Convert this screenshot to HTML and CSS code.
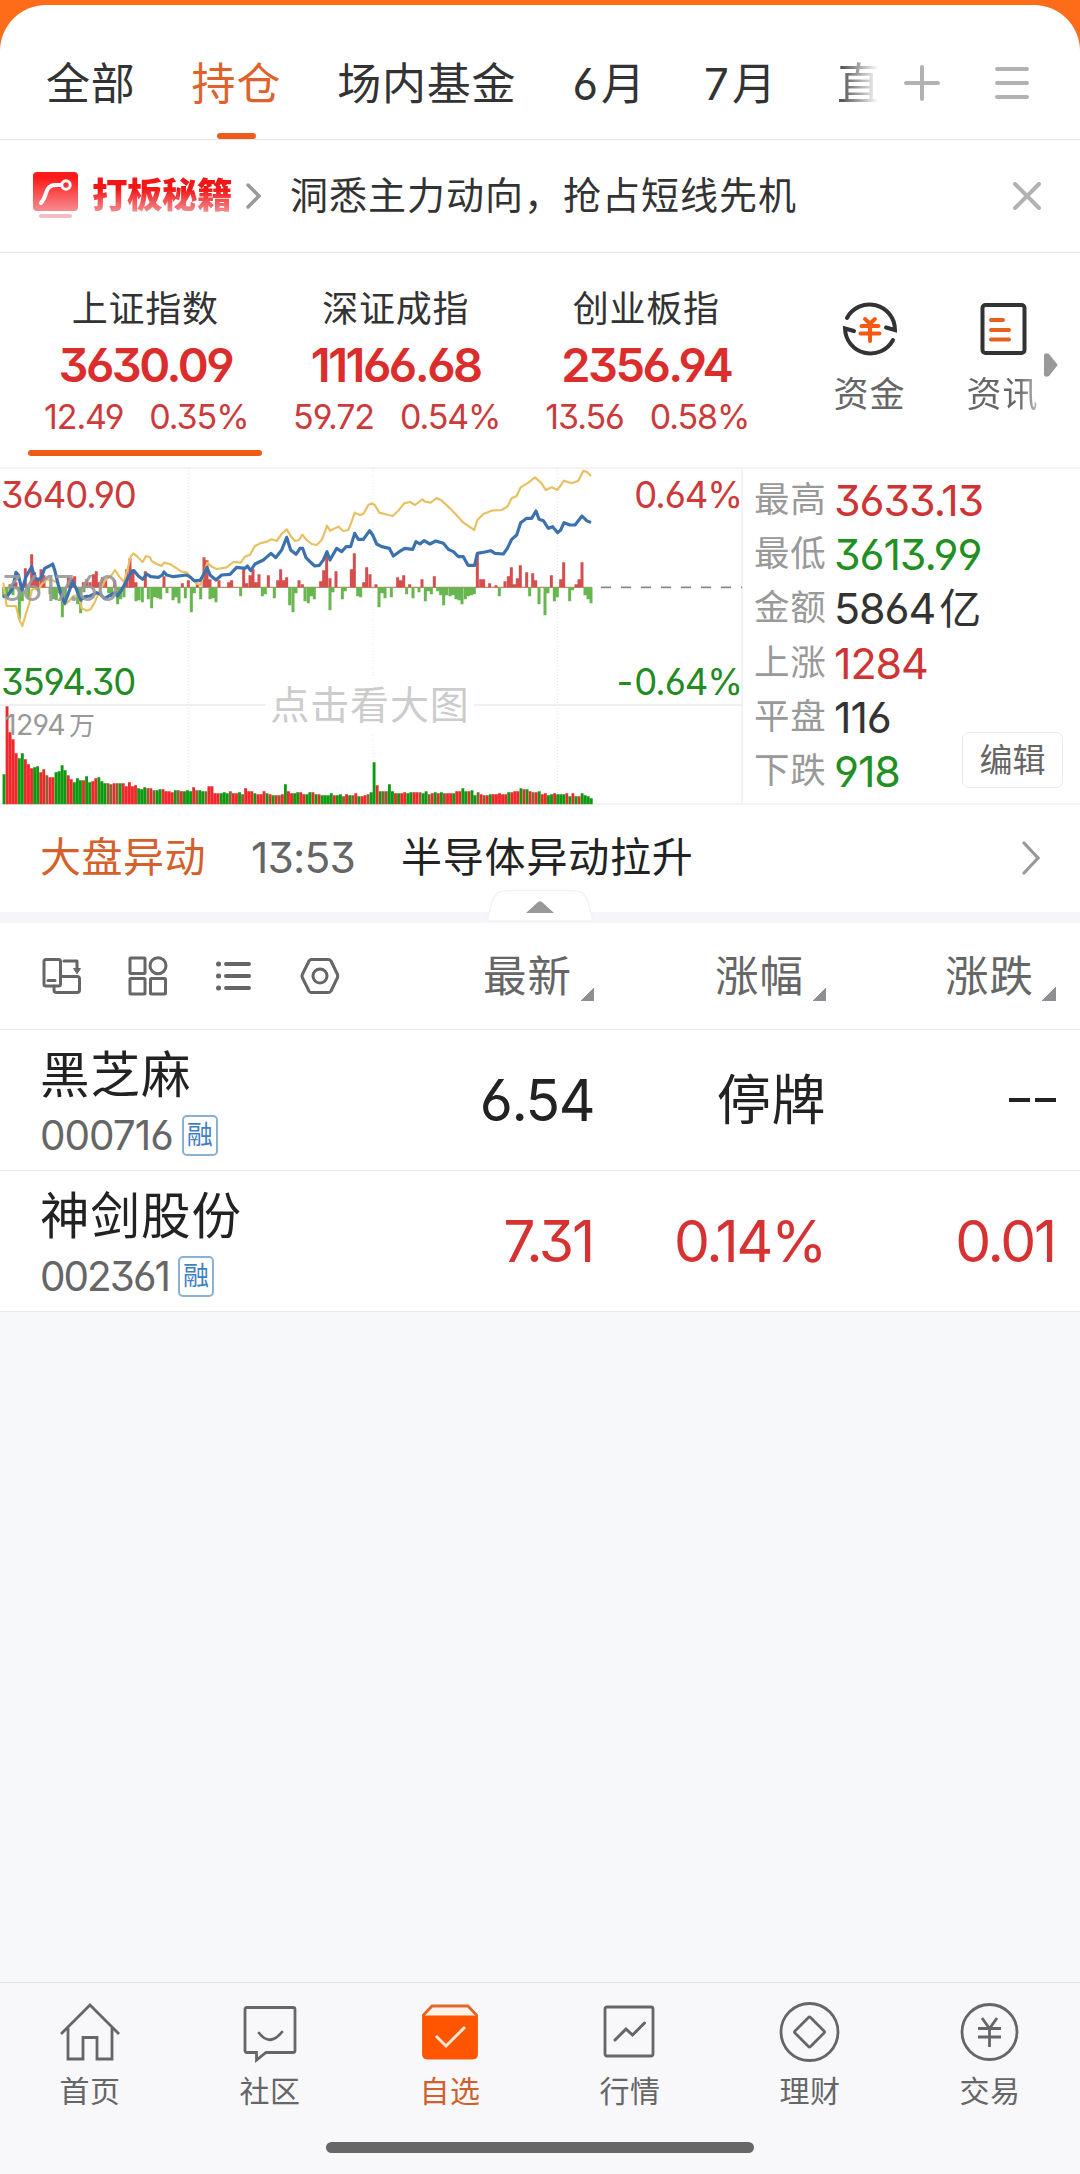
FILE: index.html
```html
<!DOCTYPE html>
<html lang="zh-CN">
<head>
<meta charset="utf-8">
<title>自选</title>
<link rel="stylesheet" href="styles.css">
</head>
<body>
<div class="app">
  <div class="sheet">
    <header class="tabs">
      <nav class="tab-list">
        <span class="tab">全部</span>
        <span class="tab active">持仓</span>
        <span class="tab">场内基金</span>
        <span class="tab month">6月</span>
        <span class="tab month">7月</span>
        <span class="tab fade">直</span>
      </nav>
      <svg class="ic-plus" width="36" height="36" viewBox="0 0 36 36"><path d="M2 18H34M18 2V34"/></svg>
      <svg class="ic-menu" width="34" height="34" viewBox="0 0 34 34"><path d="M2 3H32M2 17H32M2 31H32"/></svg>
    </header>

    <section class="promo">
      <svg width="46" height="48" viewBox="0 0 46 48">
        <defs><linearGradient id="pg" x1="0" y1="0" x2="0" y2="1"><stop offset=".15" stop-color="#ff1a1a"/><stop offset="1" stop-color="#f58c90"/></linearGradient></defs>
        <rect width="45" height="39" rx="4" fill="url(#pg)"/>
        <path d="M8 31C15 24 11 13 23 13H28" fill="none" stroke="#fff" stroke-width="4" stroke-linecap="round"/>
        <circle cx="33" cy="13" r="4.2" fill="#f43535" stroke="#fff" stroke-width="3"/>
        <rect x="6" y="42" width="33" height="4" rx="2" fill="#f3bcc0"/>
      </svg>
      <b class="promo-name">打板秘籍</b>
      <svg class="promo-go" width="15" height="26" viewBox="0 0 15 26"><path d="M2 2L13 13L2 24"/></svg>
      <span class="promo-text">洞悉主力动向，抢占短线先机</span>
      <svg class="promo-x" width="28" height="28" viewBox="0 0 28 28"><path d="M2 2L26 26M26 2L2 26"/></svg>
    </section>

    <section class="indices">
      <div class="index on"><span class="iname">上证指数</span><b>3630.09</b><span class="chg"><i>12.49</i><i>0.35%</i></span></div>
      <div class="index"><span class="iname">深证成指</span><b>11166.68</b><span class="chg"><i>59.72</i><i>0.54%</i></span></div>
      <div class="index"><span class="iname">创业板指</span><b>2356.94</b><span class="chg"><i>13.56</i><i>0.58%</i></span></div>
      <div class="shortcuts">
        <div class="short">
          <svg width="56" height="58" viewBox="0 0 56 58" fill="none" stroke="#333" stroke-width="4" stroke-linecap="round">
            <path d="M5 18A25.500 25.500 0 0 1 53 30L44 27.500"/><path d="M51 40A25.500 25.500 0 0 1 3 28.500L12 31"/>
            <path d="M23 19L28 23.500L33 19M19.500 26H36.500M18.500 33.500H37.500M28 25V41" stroke="#f65a10"/>
          </svg>
          <span>资金</span>
        </div>
        <div class="short">
          <svg width="56" height="58" viewBox="0 0 56 58" fill="none" stroke="#333" stroke-width="4" stroke-linecap="round">
            <rect x="7.500" y="5" width="42" height="48" rx="3"/>
            <path d="M16 20H28M16 30H34M16 39.500H34" stroke="#e8601e"/>
          </svg>
          <span class="dim">资讯</span>
        </div>
      </div>
      <svg class="more" width="14" height="26" viewBox="0 0 14 26"><path d="M0 3Q1 0 5 2L13 12Q14 13 13 14L5 24Q1 26 0 23Z" fill="#999"/></svg>
    </section>

    <section class="market">
      <div class="chart">
        <svg id="plot" width="742" height="338" viewBox="0 21 2226 1014"></svg>
        <span class="lab hi">3640.90</span>
        <span class="lab hi right">0.64%</span>
        <span class="lab mid">3617.60</span>
        <span class="lab lo">3594.30</span>
        <span class="lab lo right"><em>-</em>0.64%</span>
        <span class="lab vol">1294<em>万</em></span>
        <span class="hint">点击看大图</span>
      </div>
      <dl class="stats">
        <div><dt>最高</dt><dd class="up">3633.13</dd></div>
        <div><dt>最低</dt><dd class="down">3613.99</dd></div>
        <div><dt>金额</dt><dd>5864<em>亿</em></dd></div>
        <div><dt>上涨</dt><dd class="up">1284</dd></div>
        <div><dt>平盘</dt><dd>116</dd></div>
        <div><dt>下跌</dt><dd class="down">918</dd></div>
        <button class="edit">编辑</button>
      </dl>
    </section>

    <section class="alert">
      <span class="alert-tag">大盘异动</span>
      <span class="alert-time">13:53</span>
      <span class="alert-text">半导体异动拉升</span>
      <svg width="18" height="34" viewBox="0 0 18 34"><path d="M2 2L16 17L2 32"/></svg>
    </section>
    <div class="band">
      <svg class="handle" width="110" height="34" viewBox="0 0 110 34">
        <path d="M2 32L7 13Q10 1.500 22 1.500H88Q100 1.500 103 13L108 32Z" fill="#fff" stroke="#f3f3f5" stroke-width="1.500"/>
        <path d="M41 24L53 13Q55 11.500 57 13L69 24Z" fill="#999"/>
      </svg>
    </div>

    <div class="head grid">
      <div class="tools">
        <svg width="40" height="40" viewBox="0 0 40 40"><rect x="2" y="3.500" width="16.500" height="26.500" rx="2"/><path d="M6 24.500H13M12 30V34Q12 36.500 14.500 36.500H35Q37.500 36.500 37.500 34V23Q37.500 20.500 35 20.500H19M22 5H35V14"/><path d="M32 12.500H38.500L35.200 17.500Z" fill="#666" stroke-width="1"/></svg>
        <svg width="40" height="40" viewBox="0 0 40 40"><rect x="2" y="2" width="15" height="15.500" rx="1"/><circle cx="30" cy="9.700" r="8"/><rect x="2" y="22.500" width="15" height="15.500" rx="1"/><rect x="22.500" y="22.500" width="15" height="15.500" rx="1"/></svg>
        <svg width="40" height="40" viewBox="0 0 40 40"><path d="M12 8H35M12 20H35M12 32H35" stroke-width="4"/><path d="M4.500 8h.1M4.500 20h.1M4.500 32h.1" stroke-width="5"/></svg>
        <svg width="40" height="40" viewBox="0 0 40 40"><path d="M11.500 3.500H28Q30 3.500 31 5L37.500 18.500Q38 20 37.500 21.500L31 35Q30 36.500 28 36.500H11.500Q10 36.500 9 35L2.300 21.500Q1.700 20 2.300 18.500L9 5Q10 3.500 11.500 3.500Z"/><circle cx="20" cy="20" r="7"/></svg>
      </div>
      <span class="sort">最新</span><span class="sort">涨幅</span><span class="sort">涨跌</span>
    </div>
    <div class="row grid">
      <div class="stock"><span class="sname">黑芝麻</span><span class="code">000716<i>融</i></span></div>
      <span class="val">6.54</span><span class="val cjk">停牌</span><span class="val dash"><i></i><i></i></span>
    </div>
    <div class="row grid red">
      <div class="stock"><span class="sname">神剑股份</span><span class="code tight">002361<i>融</i></span></div>
      <span class="val">7.31</span><span class="val">0.14%</span><span class="val">0.01</span>
    </div>
  </div>

  <footer class="nav">
    <div class="item"><svg viewBox="0 0 64 64"><path d="M3 34L32 5L61 34M10 28V59H25V37.500H39V59H54V28"/></svg>首页</div>
    <div class="item"><svg viewBox="0 0 64 64"><path d="M9 7.500H55Q57 7.500 57 9.500V50.500Q57 52.500 55 52.500H28L18.500 60V52.500H9Q7 52.500 7 50.500V9.500Q7 7.500 9 7.500Z"/><path d="M21 33Q32 47 44 32" stroke-linecap="round"/></svg>社区</div>
    <div class="item cur"><svg viewBox="0 0 64 64"><path d="M5.500 15L14 6H50L58.500 15V54Q58.500 58 54.500 58H9.500Q5.500 58 5.500 54Z" fill="#fff3e9" stroke="#e5662c"/><path d="M4.500 15.500H59.500V54.500Q59.500 59 55 59H9Q4.500 59 4.500 54.500Z" fill="#ff5500" stroke="none"/><path d="M18 36L28 46L47 27" stroke="#ffe8d2" stroke-width="3"/></svg>自选</div>
    <div class="item"><svg viewBox="0 0 64 64"><rect x="7" y="7" width="48" height="49" rx="2"/><path d="M17 40L28 29L34.500 35L46.500 23" stroke-width="3" stroke-linecap="round"/></svg>行情</div>
    <div class="item"><svg viewBox="0 0 64 64"><circle cx="31.500" cy="32" r="28.500"/><path d="M30.500 17.500Q31.500 16.500 32.500 17.500L46 31Q47 32 46 33L32.500 46.500Q31.500 47.500 30.500 46.500L17 33Q16 32 17 31Z"/></svg>理财</div>
    <div class="item"><svg viewBox="0 0 64 64"><circle cx="31.500" cy="32" r="27.500"/><path d="M24 18L31.500 28.500L39 18M20 28.500H43M20 37H43M31.500 28.500V47"/></svg>交易</div>
    <div class="homebar"></div>
  </footer>
</div>
<script src="chart.js"></script>
</body>
</html>
```
FILE: styles.css
```css
* { box-sizing: border-box; }
body { margin: 0; background: #f7f8fa; font-family: Inter, "Noto Sans CJK SC", sans-serif; color: #333; font-feature-settings: "cv03", "cv04", "cv09"; }
i, em { font-style: normal; }
svg { display: block; flex: none; }
.app { width: 1080px; height: 2174px; display: flex; flex-direction: column; background: linear-gradient(#ff6c19 60px, #f7f8fa 60px); padding-top: 5px; overflow: hidden; }
.sheet { background: #fff; border-radius: 46px 46px 0 0; }

.tabs { height: 135px; border-bottom: 1px solid #e4e4e4; display: flex; align-items: center; }
.tab-list { display: flex; gap: 56px; padding-left: 46px; width: 904px; height: 134px; flex: none; }
.tab { position: relative; font-size: 44px; letter-spacing: .8px; line-height: 158px; white-space: nowrap; }
.tab.month { letter-spacing: 3px; }
.tab.active { color: #e0622b; }
.tab.active::after { content: ""; position: absolute; left: 25px; bottom: 0; width: 39px; height: 6px; border-radius: 3px; background: #ee5c1c; }
.tab.fade { margin-left: 2px; background: linear-gradient(90deg, #555 10%, #fff 92%); background-clip: text; -webkit-background-clip: text; color: transparent; }
.ic-plus, .ic-menu { fill: none; stroke: #b2b2b2; stroke-width: 4; stroke-linecap: round; position: relative; top: 11px; }
.ic-menu { margin-left: 55px; }

.promo { height: 113px; border-bottom: 1px solid #e4e4e4; display: flex; align-items: center; padding: 0 39px 0 33px; }
.promo-name { margin-left: 13px; width: 142px; font-size: 35.500px; font-weight: 900; letter-spacing: -.5px; line-height: 46px; background: linear-gradient(#f31616 35%, #f39a9c 90%); background-clip: text; -webkit-background-clip: text; color: transparent; }
.promo-go { margin-left: 12px; fill: none; stroke: #999; stroke-width: 3.500; stroke-linecap: round; }
.promo-text { margin-left: 29px; font-size: 38px; letter-spacing: 1px; flex: 1; line-height: 50px; padding-bottom: 2px; }
.promo-x { fill: none; stroke: #b2b2b2; stroke-width: 4; stroke-linecap: round; }

.indices { height: 214px; display: flex; position: relative; padding-left: 20px; }
.index { width: 250.500px; padding-top: 33px; display: flex; flex-direction: column; align-items: center; position: relative; }
.iname { font-size: 36px; letter-spacing: .8px; line-height: 46px; }
.index b { font-size: 47px; line-height: 66px; font-weight: 600; color: #dc2d2d; letter-spacing: -2.500px; }
.chg { display: flex; gap: 26px; font-size: 34px; line-height: 38px; letter-spacing: -1.100px; color: #cc3b3b; padding-left: 2px; }
.index.on::after { content: ""; position: absolute; left: 8px; top: 197px; width: 234px; height: 6px; border-radius: 3px; background: #f25a14; }
.shortcuts { display: flex; margin-left: 62px; gap: 61px; padding-top: 47px; }
.short { display: flex; flex-direction: column; align-items: center; width: 72px; font-size: 35px; letter-spacing: 1px; color: #666; line-height: 50px; }
.short span { margin-top: 11px; white-space: nowrap; }
.dim { background: linear-gradient(90deg, #666 70%, #bbb); background-clip: text; -webkit-background-clip: text; color: transparent; }
.more { position: absolute; left: 1044px; top: 99px; }

.market { display: flex; height: 338px; border-top: 2px solid #f3f3f3; border-bottom: 2px solid #f3f3f3; }
.chart { width: 743px; height: 338px; border-right: 2px solid #f3f3f3; position: relative; margin-top: -2px; flex: none; }
.lab { position: absolute; left: 1px; font-size: 36.500px; letter-spacing: -1.100px; line-height: 40px; }
.lab.right { left: auto; right: -1px; }
.hi { top: 8px; color: #cc3a3a; }
.lo { top: 195px; color: #228b22; }
.lab.lo em { margin-right: 2px; }
.mid { top: 101px; font-size: 35px; letter-spacing: -2px; color: #999; opacity: .9; }
.lab.mid { left: 1px; font-size: 36px; letter-spacing: -1.600px; }
.lab.vol { top: 238px; left: 5px; font-size: 28.500px; letter-spacing: -.7px; color: #999; }
.vol em { font-size: 26px; margin-left: 4px; }
.hint { position: absolute; left: 266px; top: 209px; width: 208px; text-align: center; background: #fff; color: #ccc; font-size: 39px; letter-spacing: .9px; line-height: 58px; }

.stats { margin: 0; padding: 4px 0 0 11px; flex: 1; position: relative; }
.stats div { display: flex; align-items: center; height: 54.200px; gap: 7px; }
dt { flex: none; font-size: 35.500px; letter-spacing: .8px; color: #999; line-height: 50px; width: 73px; white-space: nowrap; }
dd { margin: 0; font-size: 43px; letter-spacing: -1.100px; line-height: 50px; white-space: nowrap; }
dd em { font-size: 42px; margin-left: 4px; }
.up { color: #cf3434; }
.down { color: #228f22; }
.edit { position: absolute; left: 219px; top: 263px; width: 101px; height: 56px; padding: 0; border: 1.500px solid #e8e8e8; border-radius: 7px; background: #fff; font: 33px/50px Inter, "Noto Sans CJK SC", sans-serif; color: #666; }

.alert { height: 107px; display: flex; align-items: center; padding: 0 40px; font-size: 41px; letter-spacing: .8px; line-height: 56px; }
.alert-tag { color: #d4602b; width: 211px; padding-bottom: 4px; letter-spacing: .5px; }
.alert-time { color: #666; font-size: 42.500px; letter-spacing: -.8px; width: 150px; padding-bottom: 1px; }
.alert-text { color: #222; flex: 1; padding-bottom: 4px; }
.alert svg { fill: none; stroke: #999; stroke-width: 3.200; stroke-linecap: round; margin-bottom: 2px; }
.band { height: 11px; background: #f5f6fa; position: relative; }
.handle { position: absolute; left: 485px; top: -23px; }

.grid { display: grid; grid-template-columns: 1fr 232px 232px 230px; align-items: center; padding: 0 24px 0 40px; border-bottom: 1px solid #e8e8e8; }
.head { height: 107px; }
.tools { display: flex; gap: 46px; padding-left: 2px; }
.tools svg { fill: none; stroke: #666; stroke-width: 3; stroke-linecap: round; stroke-linejoin: round; }
.sort { justify-self: end; display: flex; font-size: 43.500px; letter-spacing: 1px; color: #666; line-height: 60px; }
.sort::after { content: ""; width: 14px; height: 14px; margin: 41px 0 0 8px; background: linear-gradient(135deg, transparent 50%, #8e8e93 50%); }
.row { height: 141px; }
.stock { display: flex; flex-direction: column; padding-top: 6px; }
.sname { font-size: 49.500px; letter-spacing: 1px; color: #222; line-height: 66px; height: 64px; }
.code { display: flex; align-items: center; height: 58px; font-size: 40.500px; letter-spacing: -1px; color: #666; }
.code.tight { letter-spacing: -2px; }
.code i { margin-left: 9px; width: 36px; height: 41px; border: 2px solid #8bb0d3; border-radius: 5px; font-size: 26px; line-height: 36px; text-align: center; letter-spacing: 0; color: #3f7fc4; }
.val { justify-self: end; font-size: 57px; letter-spacing: -1.500px; color: #222; line-height: 76px; padding-top: 2px; }
.red .val { color: #d63232; letter-spacing: -2.200px; padding-right: 1px; }
.val.cjk { font-size: 54px; letter-spacing: .6px; }
.dash { display: flex; gap: 5px; padding: 0; }
.dash i { width: 21px; height: 4px; background: #222; }

.nav { margin-top: auto; height: 192px; border-top: 1px solid #e2e2e4; background: #f8f8fa; display: grid; grid-template-columns: repeat(6, 180px); align-content: start; padding-top: 17px; position: relative; flex: none; }
.item { display: flex; flex-direction: column; align-items: center; font-size: 30px; letter-spacing: .6px; line-height: 55px; color: #666; }
.item svg { width: 64px; height: 64px; fill: none; stroke: #666; stroke-width: 2.800; }
.item.cur { color: #d0602c; }
.homebar { position: absolute; left: 326px; top: 159px; width: 428px; height: 11px; border-radius: 6px; background: #676767; }
```
FILE: chart.js
```js
// Plot units are thirds of a pixel; x runs from 0 to 2226.
const svg = document.getElementById('plot');
const NS = 'http://www.w3.org/2000/svg';
function path(d, attrs) {
  const p = document.createElementNS(NS, 'path');
  p.setAttribute('d', d);
  for (const k in attrs) p.setAttribute(k, attrs[k]);
  svg.appendChild(p);
}
const ZERO = 382, BASE = 1033;

// grid
path('M566 24V1030M1119 24V1030M1672 24V1030', { stroke: '#e4e4e4', 'stroke-width': 3, 'stroke-dasharray': '3 6' });
path('M0 735H2226', { stroke: '#f0f0f0', 'stroke-width': 6 });
path('M1803 382H2226', { stroke: '#888', 'stroke-width': 5, 'stroke-dasharray': '30 30' });
path('M8 382H1775', { stroke: '#c08a6a', 'stroke-width': 4 });

// momentum bars: x, height pairs
const up = [30,3,48,5,76,19,95,33,104,15,113,8,123,18,132,12,205,10,215,9,224,11,250,5,260,8,270,5,280,13,289,16,298,5,307,10,317,8,344,7,380,18,390,29,399,18,408,5,436,16,492,11,547,4,565,7,592,3,612,30,621,27,630,8,657,7,686,5,695,7,731,18,740,4,750,12,759,18,768,5,777,13,805,12,833,7,842,18,851,7,860,10,897,7,907,3,962,6,971,17,980,34,990,9,1008,16,1054,18,1063,34,1091,5,1100,20,1110,13,1128,3,1193,10,1202,7,1211,12,1229,3,1266,8,1303,11,1432,33,1442,8,1451,8,1469,4,1488,2,1515,6,1525,11,1534,20,1543,3,1552,9,1561,22,1580,15,1598,14,1607,7,1654,12,1682,8,1691,25,1728,3,1737,8,1746,25];
const down = [11,10,20,12,30,6,39,8,58,32,67,14,86,10,150,7,160,12,169,13,178,6,187,30,196,15,233,17,242,26,252,5,326,6,335,10,353,17,362,12,372,10,408,14,417,13,427,15,445,12,455,21,464,10,473,11,482,12,501,6,519,13,528,10,537,16,556,11,574,25,583,6,602,12,630,12,639,11,648,15,722,9,787,9,796,7,823,11,869,18,879,25,888,6,915,14,925,16,934,9,943,12,990,23,999,5,1027,12,1036,4,1073,9,1082,10,1137,20,1146,6,1155,11,1174,10,1220,7,1239,11,1257,5,1276,14,1285,4,1294,7,1313,4,1322,8,1331,18,1340,8,1350,9,1359,8,1368,12,1377,13,1386,17,1396,12,1405,9,1414,8,1423,7,1498,9,1589,9,1617,17,1635,28,1644,6,1663,14,1672,10,1709,14,1718,3,1755,8,1764,12,1773,16];
const bars = (a, s) => { let d = ''; for (let i = 0; i < a.length; i += 2) d += `M${a[i]} ${ZERO}v${s * a[i + 1] * 3}`; return d; };
path(bars(up, -1), { stroke: '#d64e4e', 'stroke-width': 9 });
path(bars(down, 1), { stroke: '#68b650', 'stroke-width': 9 });

// volume
const vol = [30,98,72,65,51,46,51,45,40,36,37,38,32,35,29,27,27,32,33,39,34,29,25,22,26,24,24,28,22,23,26,27,23,21,21,20,21,21,21,21,18,22,18,19,16,15,17,16,16,14,14,15,15,13,13,12,14,14,13,13,14,13,17,14,14,13,13,18,18,11,11,11,12,11,13,11,11,12,10,16,13,13,11,10,10,13,11,10,9,9,9,10,20,13,11,11,12,12,10,10,12,12,10,10,9,9,9,11,9,9,10,8,10,9,9,11,8,8,9,10,12,42,19,13,13,13,20,13,11,11,11,12,11,12,12,12,12,11,13,10,11,12,11,12,11,11,11,11,13,13,16,13,13,14,9,12,10,9,9,10,10,10,11,10,10,12,12,13,13,16,15,15,13,12,12,13,10,11,9,10,11,10,10,10,11,8,11,8,8,11,9,8,6];
const tint = 'grrrrggrrrggrrbrrggggrrgggrggrrgggbbrbgrrrrrgggbrbggrrrrgbrgggrbggbrrrrgggbrrgbrrr';
const fill = { r: '#f0282c', g: '#0d9a10', b: '#906034' };
const n = vol.length, w = 1771 / n;
const colorOf = i => i === 121 || i === 120 || i > n - 5 ? 'g' : tint[(i + (i > 81 ? i % 7 : 0)) % tint.length];
for (const c in fill) {
  let d = '';
  vol.forEach((h, i) => { if (colorOf(i) === c) d += `M${12 + i * w} ${BASE}v${-h * 3}`; });
  path(d, { stroke: fill[c], 'stroke-width': 8.6 });
}

// price lines
path('M10 368L14 400 20 438 48 438 58 480 67 498 78 460 88 430 95 390 105 385 115 392 125 372 140 358 160 362 172 368 185 420 194 434 205 425 220 408 235 405 245 445 260 452 272 448 285 425 300 390 315 362 335 345 345 330 358 350 372 365 382 330 392 290 400 280 412 290 428 306 438 288 450 292 455 303 470 312 485 318 492 308 510 312 530 325 545 335 562 338 575 355 588 370 602 375 612 340 622 308 635 320 650 327 680 322 700 306 722 308 735 290 750 284 765 258 780 250 800 245 815 238 830 243 845 222 860 208 875 232 885 243 897 240 907 224 920 240 935 252 950 255 965 240 975 215 981 197 990 212 1005 205 1015 200 1030 213 1045 210 1055 185 1064 158 1080 165 1090 162 1105 135 1116 130 1124 135 1138 158 1165 165 1178 168 1195 152 1212 130 1230 126 1245 135 1267 118 1275 125 1292 128 1310 114 1325 122 1350 145 1372 168 1390 188 1423 210 1432 180 1450 162 1475 152 1505 150 1522 140 1535 115 1550 108 1562 82 1585 68 1605 52 1625 70 1637 90 1655 82 1672 90 1692 62 1715 70 1735 62 1750 32 1760 35 1773 48', { fill: 'none', stroke: '#e8c062', 'stroke-width': 6.5, 'stroke-linejoin': 'round' });
path('M8 410L22 408 38 385 48 337 55 345 66 390 78 350 84 340 95 320 104 352 114 360 124 352 134 325 148 318 158 312 164 330 175 375 185 410 194 430 205 400 218 365 228 385 242 420 255 410 270 408 290 398 300 402 314 416 326 408 345 398 352 408 365 390 378 365 392 338 402 332 415 348 428 358 440 342 452 350 475 352 487 345 492 336 500 345 520 350 560 345 572 352 582 362 600 362 610 345 621 322 630 345 648 360 665 345 690 343 710 322 735 325 742 318 752 332 765 312 790 300 813 280 827 293 845 270 860 232 872 270 888 283 900 265 908 265 918 293 930 305 944 318 958 316 970 300 981 275 990 300 1010 265 1025 275 1038 260 1052 260 1064 220 1075 238 1090 238 1109 212 1118 225 1130 252 1145 260 1168 265 1180 288 1198 275 1214 265 1238 268 1248 245 1260 252 1272 242 1290 252 1307 243 1330 250 1345 268 1360 275 1375 290 1390 290 1404 316 1424 316 1432 280 1455 276 1472 272 1485 280 1510 282 1522 265 1535 238 1550 225 1562 188 1580 175 1595 175 1608 153 1617 178 1630 182 1645 205 1658 200 1673 218 1682 210 1692 188 1710 195 1725 195 1746 168 1760 182 1773 188', { fill: 'none', stroke: '#3b72ae', 'stroke-width': 9.5, 'stroke-linejoin': 'round' });
```
